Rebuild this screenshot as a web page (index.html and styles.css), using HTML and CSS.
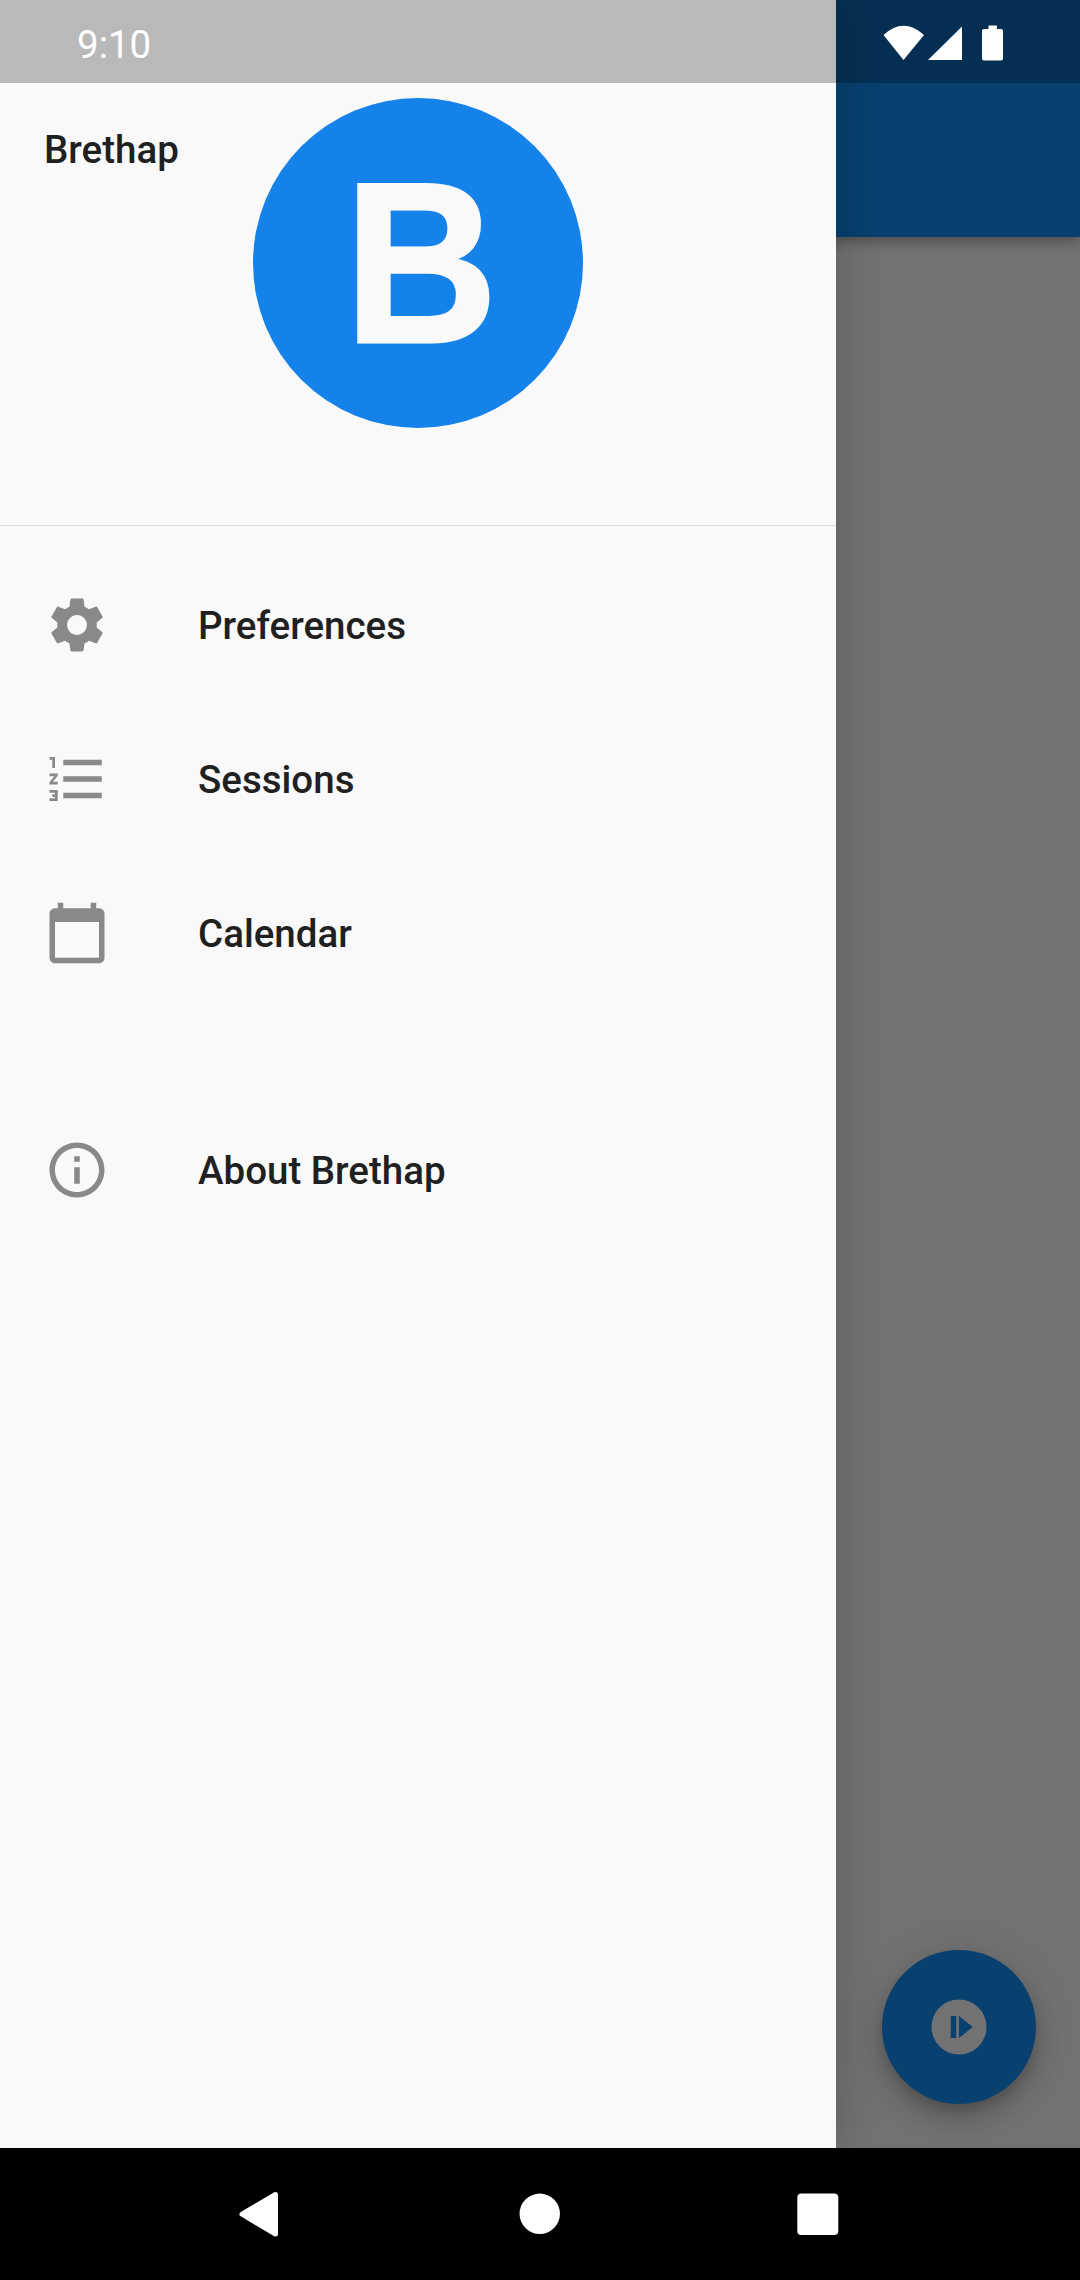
FILE: index.html
```html
<!DOCTYPE html>
<html lang="en">
<head>
<meta charset="utf-8">
<title>Brethap</title>
<link rel="stylesheet" href="styles.css">
</head>
<body>
<div class="screen">
  <div class="app">
    <div class="page">
      <header class="app-bar"></header>
      <button class="fab" aria-label="Start">
        <svg viewBox="0 0 24 24"><path fill-rule="evenodd" d="M12 2a10 10 0 1 0 0 20a10 10 0 1 0 0-20zM9 8h2v8H9zM12 8l5 4-5 4z"/></svg>
      </button>
    </div>
    <aside class="drawer">
      <div class="drawer-header">
        <span class="drawer-title">Brethap</span>
        <svg class="logo" viewBox="0 0 330 330">
          <circle cx="165" cy="165" r="165"/>
          <text x="91.500" y="243.500" textLength="153" lengthAdjust="spacingAndGlyphs">B</text>
        </svg>
      </div>
      <nav class="menu">
        <a class="item">
          <svg viewBox="0 0 24 24"><path d="M19.14 12.94c.04-.3.06-.61.06-.94 0-.32-.02-.64-.07-.94l2.03-1.58c.18-.14.23-.41.12-.61l-1.92-3.32c-.12-.22-.37-.29-.59-.22l-2.39.96c-.5-.38-1.03-.7-1.62-.94l-.36-2.54c-.04-.24-.24-.41-.48-.41h-3.84c-.24 0-.43.17-.47.41l-.36 2.54c-.59.24-1.13.57-1.62.94l-2.39-.96c-.22-.08-.47 0-.59.22L2.74 8.87c-.12.21-.08.47.12.61l2.03 1.58c-.05.3-.09.63-.09.94s.02.64.07.94l-2.03 1.58c-.18.14-.23.41-.12.61l1.92 3.32c.12.22.37.29.59.22l2.39-.96c.5.38 1.03.7 1.62.94l.36 2.54c.05.24.24.41.48.41h3.84c.24 0 .44-.17.47-.41l.36-2.54c.59-.24 1.13-.56 1.62-.94l2.39.96c.22.08.47 0 .59-.22l1.92-3.32c.12-.22.07-.47-.12-.61l-2.01-1.58zM12 15.6c-1.98 0-3.6-1.62-3.6-3.6s1.62-3.6 3.6-3.6 3.6 1.62 3.6 3.6-1.62 3.6-3.6 3.6z"/></svg>
          <span>Preferences</span>
        </a>
        <a class="item">
          <svg viewBox="0 0 24 24"><path d="M2 17h2v.5H3v1h1v.5H2v1h3v-4H2v1zm1-9h1V4H2v1h1v3zm-1 3h1.8L2 13.1v.9h3v-1H3.200L5 10.900V10H2v1zm5-6v2h14V5H7zm0 14h14v-2H7v2zm0-6h14v-2H7v2z"/></svg>
          <span>Sessions</span>
        </a>
        <a class="item">
          <svg viewBox="0 0 24 24"><path d="M20 3h-1V1h-2v2H7V1H5v2H4c-1.100 0-2 .9-2 2v16c0 1.100.9 2 2 2h16c1.100 0 2-.9 2-2V5c0-1.100-.9-2-2-2zm0 18H4V8h16v13z"/></svg>
          <span>Calendar</span>
        </a>
        <a class="item about">
          <svg viewBox="0 0 24 24"><path d="M11 7h2v2h-2zm0 4h2v6h-2zm1-9C6.480 2 2 6.480 2 12s4.480 10 10 10 10-4.480 10-10S17.520 2 12 2zm0 18c-4.410 0-8-3.590-8-8s3.590-8 8-8 8 3.590 8 8-3.590 8-8 8z"/></svg>
          <span>About Brethap</span>
        </a>
      </nav>
    </aside>
    <div class="status-bar">
      <span class="clock">9:10</span>
      <svg class="status-icons" viewBox="0 0 122 38">
        <path d="M0.500 10Q20.500-8.500 41 10L20.500 35z"/>
        <path d="M79 1.500V35H45z"/>
        <path d="M105.500 0.500h8.500v3.500h4q2 0 2 2v27.500q0 2-2 2h-17q-2 0-2-2V6q0-2 2-2h4.500z"/>
      </svg>
    </div>
  </div>
  <footer class="nav-bar">
    <svg viewBox="0 0 46 46"><path d="M39.500 3.500V43L6 23.200z" stroke-width="5" stroke-linejoin="round"/></svg>
    <svg viewBox="0 0 46 46"><circle cx="24.750" cy="22.800" r="20.200"/></svg>
    <svg viewBox="0 0 46 46"><rect x="2.300" y="2.500" width="41" height="41.500" rx="4"/></svg>
  </footer>
</div>
</body>
</html>
```
FILE: styles.css
```css
* { box-sizing: border-box; }

body {
  margin: 0;
  font-family: Roboto, sans-serif;
}

.screen {
  display: flex;
  flex-direction: column;
  width: 1080px;
  height: 2280px;
  overflow: hidden;
}

/* Page, drawer and status bar share one grid cell and stack in order */
.app {
  display: grid;
  height: 2148px;
  overflow: hidden;
}

.app > * { grid-area: 1 / 1; }

.page {
  display: flex;
  flex-direction: column;
  justify-content: space-between;
  background: #727272;
}

.app-bar {
  height: 237px;
  background: #08406f;
  box-shadow: 0 5px 11px rgba(0, 0, 0, 0.22), 0 2px 14px rgba(0, 0, 0, 0.12);
}

.fab {
  display: grid;
  place-items: center;
  align-self: flex-end;
  width: 154px;
  height: 154px;
  margin: 0 44px 44px 0;
  padding: 0;
  border: 0;
  border-radius: 50%;
  background: #08406f;
  box-shadow: 0 8px 14px -3px rgba(0, 0, 0, 0.2), 0 16px 27px rgba(0, 0, 0, 0.13), 0 3px 50px rgba(0, 0, 0, 0.1);
}

.fab svg {
  width: 66px;
  height: 66px;
  fill: #727272;
}

.drawer {
  width: 836px;
  background: #f9f9f9;
  box-shadow: 0 0 44px rgba(0, 0, 0, 0.2);
}

.drawer-header {
  display: grid;
  height: 526px;
  padding-top: 97.5px;
  border-bottom: 1px solid #dedede;
}

.drawer-header > * { grid-area: 1 / 1; }

.drawer-title {
  margin: 30.5px 0 0 44px;
  color: #202020;
  font-size: 38.5px;
  font-weight: 500;
  line-height: 44px;
}

.logo {
  justify-self: center;
  width: 330px;
  height: 330px;
  fill: #1482e9;
}

.logo text {
  fill: #f9f9f9;
  stroke: #f9f9f9;
  stroke-width: 3px;
  font: bold 228px "Liberation Sans", Arial, sans-serif;
}

.menu {
  padding-top: 22px;
}

.item {
  display: flex;
  align-items: center;
  gap: 88px;
  height: 154px;
  padding: 0 44px;
  color: #202020;
  font-size: 38.5px;
  font-weight: 500;
}

.item svg {
  width: 66px;
  height: 66px;
  fill: #898989;
}

.about { margin-top: 83px; }

.status-bar {
  display: flex;
  justify-content: space-between;
  align-items: flex-start;
  height: 83px;
  padding: 22px 75px 0 77px;
  background: rgba(0, 0, 0, 0.255);
  color: #fff;
}

.clock {
  font-size: 38.5px;
  line-height: 45px;
}

.status-icons {
  width: 122px;
  height: 38px;
  margin-top: 3px;
  fill: #fff;
}

.nav-bar {
  display: flex;
  justify-content: space-between;
  align-items: center;
  height: 132px;
  padding: 0 239.500px 0 236px;
  background: #000;
}

.nav-bar svg {
  width: 46px;
  height: 46px;
  fill: #fff;
  stroke: #fff;
  stroke-width: 0;
}
```
